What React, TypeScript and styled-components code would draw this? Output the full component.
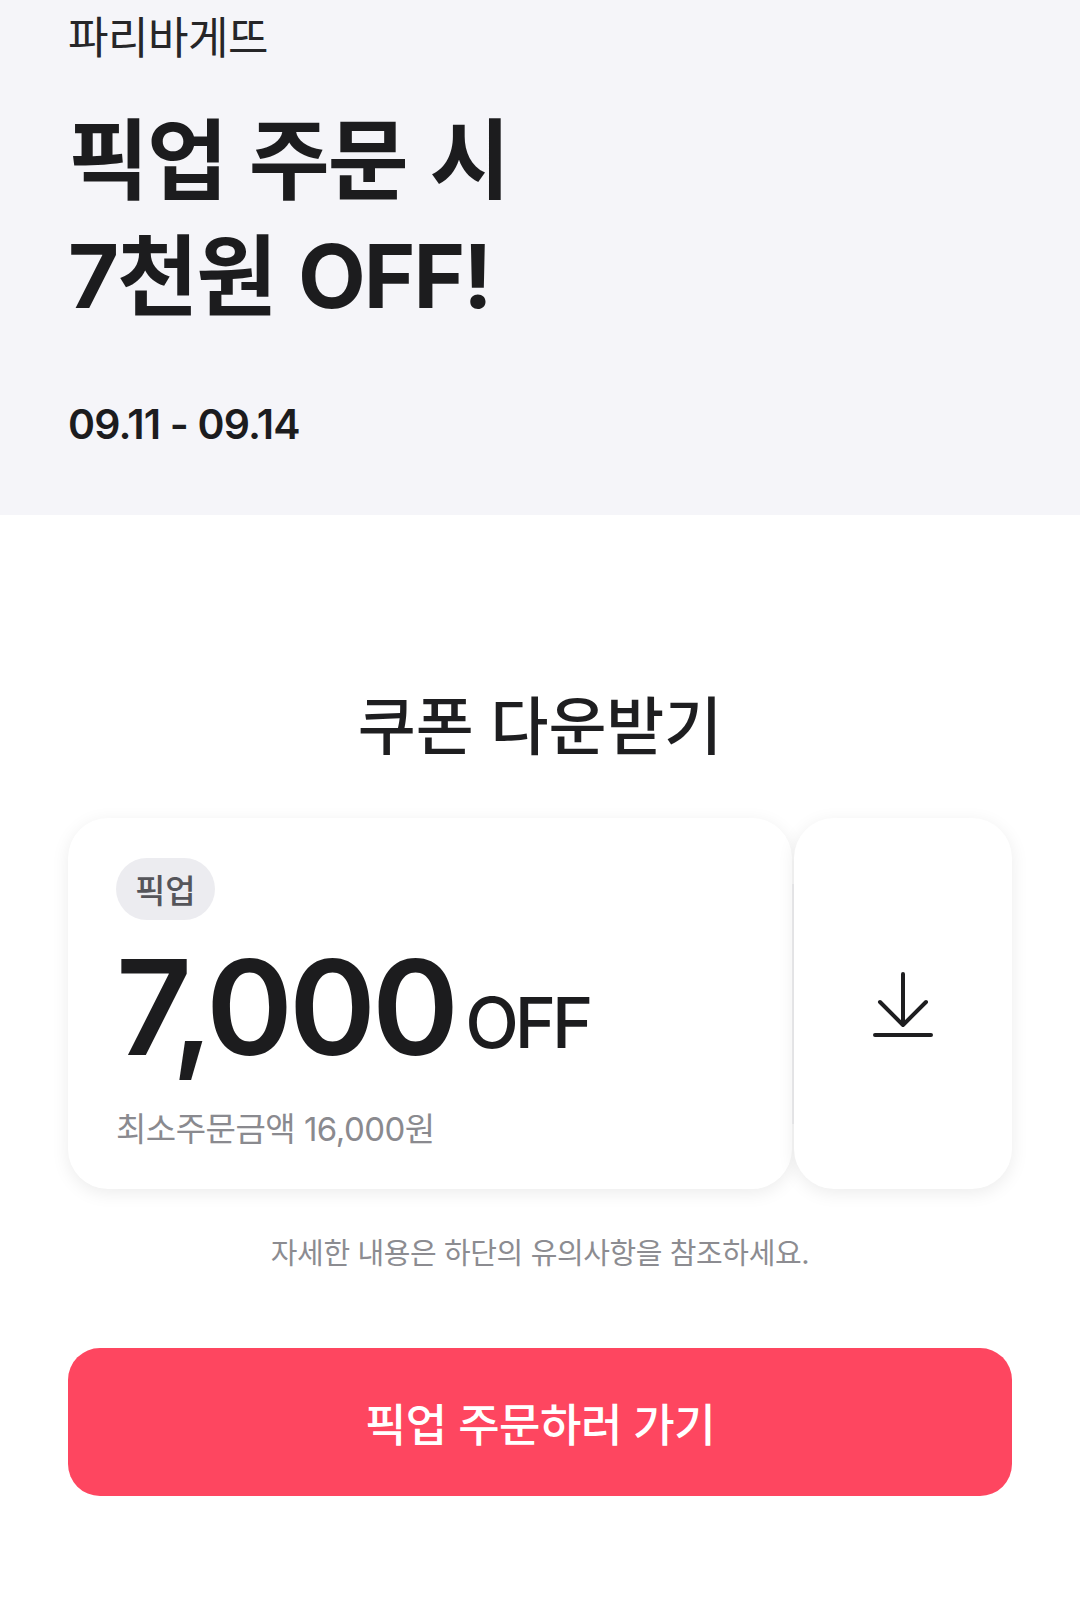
import React from "react";
import styled, { createGlobalStyle } from "styled-components";

const GlobalStyle = createGlobalStyle`
  html, body {
    margin: 0;
    padding: 0;
    background: #ffffff;
  }
  body {
    font-family: Inter, "Noto Sans CJK KR", sans-serif;
    color: #1e1e20;
    -webkit-font-smoothing: antialiased;
  }
  * { box-sizing: border-box; }
`;

const Page = styled.div`
  width: 1080px;
  min-height: 1614px;
  background: #ffffff;
  display: flex;
  flex-direction: column;
`;

const Hero = styled.header`
  height: 515px;
  background: #f5f5f9;
  padding: 16px 68px 0;
  display: flex;
  flex-direction: column;
`;

const Brand = styled.div`
  font-size: 44px;
  line-height: 1;
  font-weight: 400;
  color: #262628;
  letter-spacing: -0.5px;
`;

const Headline = styled.h1`
  margin: 42px 0 0;
  font-size: 88px;
  line-height: 116px;
  font-weight: 700;
  letter-spacing: -2px;
  word-spacing: 4px;
  color: #1c1c1e;
`;

const Period = styled.div`
  margin-top: 70px;
  font-size: 41px;
  line-height: 1;
  font-weight: 600;
  letter-spacing: -0.8px;
  color: #1c1c1e;
`;

const CouponSection = styled.section`
  display: flex;
  flex-direction: column;
  align-items: center;
  padding: 180px 68px 0;
`;

const SectionTitle = styled.h2`
  margin: 0;
  font-size: 63px;
  line-height: 1;
  font-weight: 500;
  color: #1e1e20;
`;

const Ticket = styled.div`
  margin-top: 60px;
  width: 944px;
  display: flex;
  align-items: stretch;
`;

const TicketBody = styled.div`
  flex: 1;
  background: #ffffff;
  border-radius: 40px;
  box-shadow: 0 4px 18px rgba(0, 0, 0, 0.08);
  padding: 40px 48px 43px;
  display: flex;
  flex-direction: column;
  align-items: flex-start;
`;

const Divider = styled.div`
  width: 2px;
  height: 240px;
  align-self: center;
  background: #ececee;
`;

const TicketStub = styled.button`
  width: 218px;
  border: none;
  background: #ffffff;
  border-radius: 40px;
  box-shadow: 0 4px 18px rgba(0, 0, 0, 0.08);
  display: flex;
  align-items: center;
  justify-content: center;
  padding: 0;
  cursor: pointer;
`;

const Tag = styled.span`
  height: 62px;
  padding: 0 19px;
  border-radius: 31px;
  background: #ececf0;
  color: #55555a;
  font-size: 33px;
  font-weight: 500;
  display: inline-flex;
  align-items: center;
`;

const Amount = styled.div`
  margin-top: 21px;
  font-size: 132px;
  line-height: 1;
  font-weight: 600;
  letter-spacing: -4px;
  color: #1c1c1e;
  white-space: nowrap;
`;

const Unit = styled.span`
  margin-left: 10px;
  font-size: 70px;
  font-weight: 500;
  letter-spacing: -4px;
  vertical-align: 7px;
`;

const MinOrder = styled.div`
  margin-top: 40px;
  font-size: 33px;
  line-height: 1;
  font-weight: 400;
  letter-spacing: -0.5px;
  color: #8a8a8f;
`;

const Notice = styled.p`
  margin: 50px 0 0;
  font-size: 29px;
  line-height: 1;
  letter-spacing: -0.4px;
  color: #8c8c91;
`;

const CtaButton = styled.button`
  margin-top: 80px;
  width: 944px;
  height: 148px;
  border: none;
  border-radius: 32px;
  background: #fe4660;
  color: #ffffff;
  font-family: Inter, "Noto Sans CJK KR", sans-serif;
  font-size: 45px;
  font-weight: 500;
  letter-spacing: -0.5px;
  cursor: pointer;
`;

const DownloadIcon = () => (
  <svg width="60" height="68" viewBox="0 0 60 68" fill="none">
    <path
      d="M30 4 V55 M7 32 L30 55 L53 32 M2 65 H58"
      stroke="#1e1e20"
      strokeWidth="4"
      strokeLinecap="round"
      strokeLinejoin="round"
    />
  </svg>
);

export default function App() {
  return (
    <>
      <GlobalStyle />
      <Page>
        <Hero>
          <Brand>파리바게뜨</Brand>
          <Headline>
            픽업 주문 시
            <br />
            7천원 OFF!
          </Headline>
          <Period>09.11 - 09.14</Period>
        </Hero>
        <CouponSection>
          <SectionTitle>쿠폰 다운받기</SectionTitle>
          <Ticket>
            <TicketBody>
              <Tag>픽업</Tag>
              <Amount>
                7,000<Unit>OFF</Unit>
              </Amount>
              <MinOrder>최소주문금액 16,000원</MinOrder>
            </TicketBody>
            <Divider />
            <TicketStub aria-label="쿠폰 다운로드">
              <DownloadIcon />
            </TicketStub>
          </Ticket>
          <Notice>자세한 내용은 하단의 유의사항을 참조하세요.</Notice>
          <CtaButton>픽업 주문하러 가기</CtaButton>
        </CouponSection>
      </Page>
    </>
  );
}
